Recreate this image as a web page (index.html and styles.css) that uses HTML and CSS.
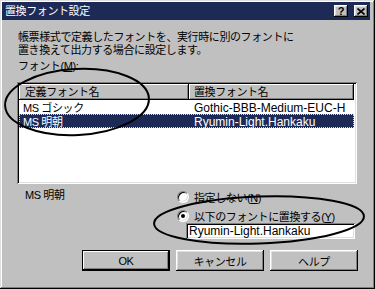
FILE: index.html
```html
<!DOCTYPE html>
<html lang="ja">
<head>
  <meta charset="UTF-8">
  <title>置換フォント設定</title>
  <link rel="stylesheet" href="styles.css">
</head>
<body>
  <div class="window">
    <div class="titlebar">
      <span class="title">置換フォント設定</span>
      <div class="caption-buttons">
        <button class="cap-btn help">?</button>
        <button class="cap-btn close">
          <svg width="8" height="7" viewBox="0 0 8 7"><path d="M0.5 0.5 L7.5 6.5 M7.5 0.5 L0.5 6.5" stroke="#000" stroke-width="1.6"/></svg>
        </button>
      </div>
    </div>

    <div class="content">
      <p class="desc">帳票様式で定義したフォントを、実行時に別のフォントに<br>置き換えて出力する場合に設定します。</p>
      <div class="field-label">フォント(<u>M</u>):</div>

      <div class="listview">
        <div class="lv-header">
          <div class="lv-head c1">定義フォント名</div>
          <div class="lv-head c2">置換フォント名</div>
        </div>
        <div class="lv-row">
          <span class="c1">MS ゴシック</span>
          <span class="c2">Gothic-BBB-Medium-EUC-H</span>
        </div>
        <div class="lv-row selected">
          <span class="c1">MS 明朝</span>
          <span class="c2">Ryumin-Light.Hankaku</span>
        </div>
      </div>

      <div class="options">
        <div class="current-font">MS 明朝</div>
        <div class="choices">
          <label class="radio"><span class="radio-dot"></span><span class="radio-text">指定しない(<u>N</u>)</span></label>
          <label class="radio checked"><span class="radio-dot"></span><span class="radio-text">以下のフォントに置換する(<u>Y</u>)</span></label>
          <div class="textbox">Ryumin-Light.Hankaku</div>
        </div>
      </div>

      <div class="actions">
        <button class="btn default">OK</button>
        <button class="btn">キャンセル</button>
        <button class="btn">ヘルプ</button>
      </div>
    </div>

    <!-- hand-drawn annotation marks -->
    <svg class="marks" width="375" height="289" viewBox="0 0 375 289">
      <ellipse cx="77" cy="102" rx="72" ry="33" transform="rotate(-3 77 102)"/>
      <ellipse cx="259" cy="220" rx="105" ry="23.5" transform="rotate(-2 259 220)"/>
    </svg>
  </div>
</body>
</html>
```

FILE: styles.css
```css
:root {
  --face: #c0c0c0;
  --light: #dfdfdf;
  --shadow: #808080;
  --dark: #000000;
  --navy: #1e2a56;
}

body {
  margin: 0;
  background: var(--face);
  font-family: "Liberation Sans", "Noto Sans CJK JP", sans-serif;
  font-size: 11px;
  letter-spacing: -0.4px;
  color: #000;
}

.window {
  position: relative;
  width: 375px;
  height: 289px;
  box-sizing: border-box;
  padding: 2px 5px 3px 2px;
  background: var(--face);
  box-shadow: inset -1px -1px var(--dark), inset 1px 1px var(--light),
              inset -2px -2px var(--shadow), inset 2px 2px #ffffff;
  display: flex;
  flex-direction: column;
}

.titlebar {
  height: 18px;
  background: var(--navy);
  color: #ffffff;
  display: flex;
  align-items: center;
  justify-content: space-between;
  padding: 0 2px 0 3px;
}

.title {
  line-height: 13px;
}

.caption-buttons {
  display: flex;
  gap: 6px;
}

.cap-btn {
  width: 14px;
  height: 12px;
  padding: 0;
  border: none;
  background: var(--face);
  box-shadow: inset -1px -1px var(--dark), inset 1px 1px #ffffff,
              inset -2px -2px var(--shadow), inset 2px 2px var(--light);
  display: flex;
  align-items: center;
  justify-content: center;
  font-family: "Liberation Sans", sans-serif;
  font-weight: bold;
  font-size: 11px;
  line-height: 10px;
  letter-spacing: 0;
  color: #000;
}

.content {
  flex: 1;
  display: flex;
  flex-direction: column;
  padding: 0 13px 0 15px;
}

.desc {
  margin: 11px 0 0 1px;
  line-height: 13px;
}

.field-label {
  margin: 3px 0 0 1px;
  line-height: 13px;
}

u {
  text-decoration-thickness: 1px;
  text-underline-offset: 1px;
}

.listview {
  margin-top: 9px;
  height: 102px;
  box-sizing: border-box;
  background: #ffffff;
  box-shadow: inset 1px 1px var(--shadow), inset -1px -1px #ffffff,
              inset 2px 2px var(--dark), inset -2px -2px var(--light);
  padding: 2px;
}

.lv-header {
  display: flex;
  width: 335px;
  height: 16px;
}

.lv-head {
  box-sizing: border-box;
  background: var(--face);
  box-shadow: inset -1px -1px var(--dark), inset 1px 1px #ffffff,
              inset -2px -2px var(--shadow);
  line-height: 16px;
  padding-left: 6px;
}

.lv-head.c1 {
  width: 170px;
}

.lv-head.c2 {
  flex: 1;
  padding-left: 5px;
}

.lv-row {
  display: flex;
  width: 335px;
  height: 14px;
  box-sizing: border-box;
  line-height: 14px;
  border: 1px solid transparent;
}

.lv-row .c1 {
  width: 170px;
  box-sizing: border-box;
  padding-left: 3px;
}

.lv-row .c2 {
  padding-left: 4px;
  font-size: 12px;
  letter-spacing: 0;
}

.lv-row.selected {
  background: var(--navy);
  color: #ffffff;
  border: 1px dotted #e6e65a;
}

.options {
  display: flex;
  margin-top: 3px;
}

.current-font {
  width: 160px;
  padding-left: 8px;
  box-sizing: border-box;
  margin-top: 2px;
  line-height: 13px;
}

.choices {
  display: flex;
  flex-direction: column;
}

.radio {
  display: flex;
  align-items: center;
  gap: 5px;
  height: 19px;
}

.radio-dot {
  width: 12px;
  height: 12px;
  box-sizing: border-box;
  border-radius: 50%;
  background: #ffffff;
  border: 1px solid;
  border-color: var(--shadow) #ffffff #ffffff var(--shadow);
  box-shadow: inset 1px 1px var(--dark), inset -1px -1px var(--light);
  display: flex;
  align-items: center;
  justify-content: center;
}

.radio.checked .radio-dot::after {
  content: "";
  width: 4px;
  height: 4px;
  border-radius: 50%;
  background: #000;
}

.textbox {
  margin: -2px 0 0 9px;
  width: 169px;
  height: 16px;
  box-sizing: border-box;
  background: #ffffff;
  box-shadow: inset 1px 1px var(--shadow), inset -1px -1px #ffffff,
              inset 2px 2px var(--dark), inset -2px -2px var(--light);
  padding: 0 3px;
  font-size: 12px;
  letter-spacing: 0;
  line-height: 16px;
}

.actions {
  display: flex;
  justify-content: flex-end;
  gap: 6px;
  margin: 11px -1px 0 0;
}

.btn {
  width: 88px;
  height: 21px;
  padding: 0;
  border: none;
  background: var(--face);
  box-shadow: inset -1px -1px var(--dark), inset 1px 1px #ffffff,
              inset -2px -2px var(--shadow), inset 2px 2px var(--light);
  font-family: inherit;
  font-size: 11px;
  letter-spacing: -0.4px;
  color: #000;
}

.btn.default {
  box-shadow: inset 0 0 0 1px var(--dark), inset -2px -2px var(--dark),
              inset 2px 2px #ffffff, inset -3px -3px var(--shadow);
}

.marks {
  position: absolute;
  top: 0;
  left: 0;
  pointer-events: none;
}

.marks ellipse {
  fill: none;
  stroke: #000;
  stroke-width: 2;
}
```
